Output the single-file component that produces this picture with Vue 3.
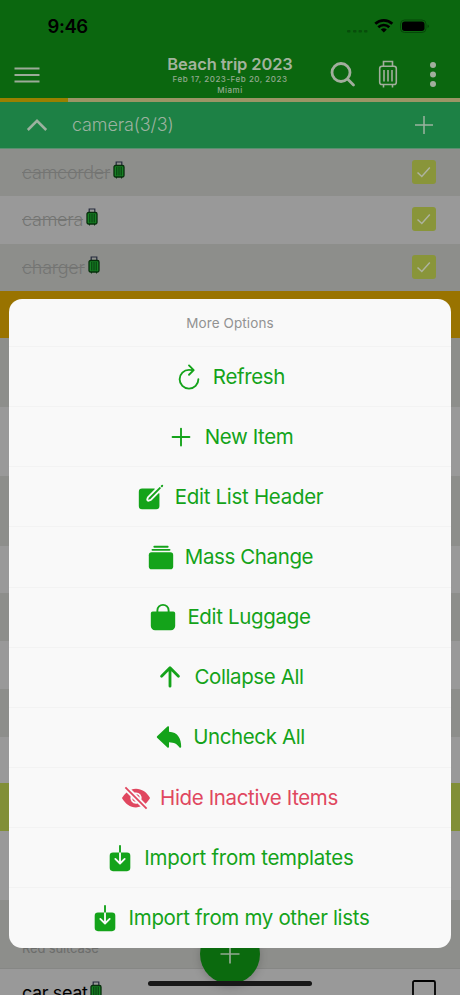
<script setup>
const actions = [
  { label: 'Refresh', icon: 'refresh', track: -0.35 },
  { label: 'New Item', icon: 'add', track: -0.4 },
  { label: 'Edit List Header', icon: 'create', track: -0.3 },
  { label: 'Mass Change', icon: 'albums', track: -0.4 },
  { label: 'Edit Luggage', icon: 'bag', track: -0.33 },
  { label: 'Collapse All', icon: 'up', track: -0.4 },
  { label: 'Uncheck All', icon: 'undo', track: -0.4 },
  { label: 'Hide Inactive Items', icon: 'eyeoff', track: -0.37, danger: true },
  { label: 'Import from templates', icon: 'download', track: -0.25 },
  { label: 'Import from my other lists', icon: 'download', track: -0.33 }
]
const shapes = {
  refresh: { line: 'M320 146s24.36-12-64-12a160 160 0 10160 160M256 58l80 80-80 80', w: 32 },
  add: { line: 'M256 112v288M400 256H112', w: 32 },
  create: { fill: 'M459.94 53.25a16.06 16.06 0 00-23.22-.56L424.35 65a8 8 0 000 11.31l11.34 11.32a8 8 0 0011.34 0l12.06-12c6.1-6.09 6.67-16.01.85-22.38zM399.34 90L218.82 270.2a9 9 0 00-2.31 3.93L208.16 299a3.91 3.91 0 004.86 4.86l24.85-8.35a9 9 0 003.93-2.31L422 112.66a9 9 0 000-12.66l-9.95-10a9 9 0 00-12.71 0zM386.34 193.66L264.45 315.79A41.08 41.08 0 01247.58 326l-25.9 8.67a35.92 35.92 0 01-44.33-44.33l8.67-25.9a41.08 41.08 0 0110.19-16.87l122.13-121.91a8 8 0 00-5.65-13.66H104a56 56 0 00-56 56v240a56 56 0 0056 56h240a56 56 0 0056-56V199.31a8 8 0 00-13.66-5.65z' },
  albums: { fill: 'M96 176h320a48 48 0 0148 48v192a48 48 0 01-48 48H96a48 48 0 01-48-48V224a48 48 0 0148-48z', line: 'M110 134h292M142 82h228', w: 32 },
  bag: { fill: 'M432 160h-64v-16a112 112 0 00-224 0v16H80a32 32 0 00-32 32v216a72 72 0 0072 72h272a72 72 0 0072-72V192a32 32 0 00-32-32zm-256-16a80 80 0 01160 0v16H176z' },
  up: { line: 'M112 244l144-144 144 144M256 120v292', w: 48 },
  undo: { fill: 'M448 440a16 16 0 01-12.61-6.15c-22.86-29.27-44.07-51.86-73.32-67C335 352.88 301 345.59 256 344.23V424a16 16 0 01-27 11.57l-176-168a16 16 0 010-23.14l176-168A16 16 0 01256 88v80.36c74.14 3.41 129.38 30.91 164.35 81.87C449.32 292.44 464 350.9 464 424a16 16 0 01-16 16z' },
  eyeoff: { fill: 'M63.998 86.004l21.998-21.998L448 426.01l-21.998 21.998zM259.34 192.09l60.57 60.57a64.07 64.07 0 00-60.57-60.57zM252.66 319.91l-60.57-60.57a64.07 64.07 0 0060.57 60.57zM256 352a96 96 0 01-92.6-121.34l-69.07-69.08C66.12 187.42 39.24 221.14 16 256c26.42 44 62.56 89.24 100.2 115.18C159.38 400.92 206.33 416 255.76 416A233.47 233.47 0 00335 402.2l-53.61-53.6A95.84 95.84 0 01256 352zM256 160a96 96 0 0192.6 121.34L419.26 352c29.15-26.25 56.07-61.56 76.74-96-26.38-43.43-62.9-88.56-101.18-114.82C351.1 111.2 304.31 96 255.76 96a222.92 222.92 0 00-78.21 14.29l53.11 53.11A95.84 95.84 0 01256 160z' },
  download: { fill: 'M376 160H272v153.37l52.69-52.68a16 16 0 0122.62 22.62l-80 80a16 16 0 01-22.62 0l-80-80a16 16 0 0122.62-22.62L240 313.37V160H136a56.06 56.06 0 00-56 56v208a56.06 56.06 0 0056 56h240a56.06 56.06 0 0056-56V216a56.06 56.06 0 00-56-56zM272 48a16 16 0 00-32 0v112h32z' }
}
const packed = ['camcorder', 'camera', 'charger']
const covered = [
  { kind: 'amber', h: 47.5 }, { kind: 'odd', h: 69 }, { kind: 'even', h: 69 },
  { kind: 'odd', h: 69.5 }, { kind: 'even', h: 47.5 }, { kind: 'odd', h: 48 },
  { kind: 'even', h: 48 }, { kind: 'odd', h: 47.5 }, { kind: 'even', h: 46.5 },
  { kind: 'lime', h: 48 }, { kind: 'even', h: 69 }
]
</script>

<template>
  <div class="screen">
    <header class="top">
      <div class="status">
        <span class="clock">9:46</span>
        <svg class="signals" width="84.500" height="20" viewBox="0 0 84.500 20">
          <g fill="#084d0b"><rect x="1" y="14" width="3.500" height="2.500" rx="1" /><rect x="7" y="14" width="3.500" height="2.500" rx="1" /><rect x="12.500" y="14" width="3.500" height="2.500" rx="1" /><rect x="18" y="14" width="3.500" height="2.500" rx="1" /></g>
          <path d="M29.300 7.800a12.200 12.200 0 0117 0M32.300 11.200a8 8 0 0111 0" fill="none" stroke="#000" stroke-width="2.700" />
          <path d="M37.800 16.600l-3-3a4.300 4.300 0 016 0z" />
          <rect x="54.500" y="4" width="25.500" height="12.500" rx="4" fill="none" stroke="#064709" />
          <rect x="56" y="5.500" width="22.500" height="9.500" rx="2.700" />
          <path d="M81.500 8.500v3.600q1.500-.6 1.500-1.800T81.500 8.500z" fill="#064709" />
        </svg>
      </div>
      <div class="bar">
        <svg class="burger" width="26" height="18" viewBox="0 0 26 18"><path d="M.5 2.500h25M.5 9h25M.5 15.500h25" stroke="#9cab98" stroke-width="1.800" /></svg>
        <div class="heading">
          <div class="title">Beach trip 2023</div>
          <div class="dates">Feb 17, 2023-Feb 20, 2023</div>
          <div class="place">Miami</div>
        </div>
        <div class="tools">
          <svg width="28" height="28" viewBox="0 0 28 28" fill="none" stroke="#a2ae9d" stroke-width="2.800" stroke-linecap="round"><circle cx="12" cy="12.500" r="9" /><path d="M18.800 19.300l5.700 5.700" /></svg>
          <svg class="case" width="20" height="28" viewBox="0 0 20 28" fill="none" stroke="#a2ae9d" stroke-width="1.600"><path d="M5.500 6V1.500h9V6M4 6.300h12q2.300 0 2.300 2.300v13.600q0 2.300-2.300 2.300H4q-2.300 0-2.300-2.300V8.600Q1.700 6.300 4 6.300zM6 10v11.500M10 10v11.500M14 10v11.500M5.500 25v2.500M14.500 25v2.500" /></svg>
          <svg class="dots" width="8" height="28" viewBox="0 0 8 28" fill="#a2ae9d"><circle cx="4" cy="5" r="3" /><circle cx="4" cy="14.500" r="3" /><circle cx="4" cy="24" r="3" /></svg>
        </div>
      </div>
      <div class="progress"><div class="done"></div></div>
    </header>

    <div class="group">
      <svg width="22" height="14" viewBox="0 0 22 14" fill="none" stroke="#9cb2a0" stroke-width="2.500"><path d="M1.800 12L11 2.800 20.200 12" /></svg>
      <span class="groupname">camera(3/3)</span>
      <svg width="20" height="20" viewBox="0 0 20 20" stroke="#9cb2a0" stroke-width="1.500"><path d="M10 1v18M1 10h18" /></svg>
    </div>

    <div v-for="(name, i) in packed" :key="name" class="item" :class="i % 2 ? 'even' : 'odd'">
      <span class="struck">{{ name }}</span>
      <svg class="tag" width="12" height="18" viewBox="0 0 12 18"><path d="M3.200 5V1h5.600V5" fill="none" stroke="#252a3c" stroke-width="1.200" /><rect x="1" y="4.500" width="10" height="11.500" rx="1.500" fill="#178024" stroke="#062f0b" stroke-width="1.300" /><path d="M3.800 6v8.500M6 6v8.500M8.200 6v8.500M3.500 16v1.500M8.500 16v1.500" stroke="#062f0b" stroke-width=".9" /></svg>
      <svg class="check" width="24" height="24" viewBox="0 0 24 24"><rect width="24" height="24" rx="3" fill="#89953a" /><path d="M5.500 12.500l4.300 4 8-9" fill="none" stroke="#aeb39f" stroke-width="1.500" /></svg>
    </div>
    <div v-for="(row, i) in covered" :key="i" class="row" :class="row.kind" :style="{ height: row.h + 'px' }"></div>
    <div class="row odd noted"><span class="note">Red suitcase</span></div>
    <div class="item last">
      <span class="name">car seat</span>
      <svg class="tag" width="12" height="18" viewBox="0 0 12 18"><path d="M3.200 5V1h5.600V5" fill="none" stroke="#252a3c" stroke-width="1.200" /><rect x="1" y="4.500" width="10" height="11.500" rx="1.500" fill="#178024" stroke="#062f0b" stroke-width="1.300" /><path d="M3.800 6v8.500M6 6v8.500M8.200 6v8.500" stroke="#062f0b" stroke-width=".9" /></svg>
      <svg class="check" width="24" height="24" viewBox="0 0 24 24"><rect x="1" y="1" width="22" height="22" rx="1.500" fill="none" stroke="#000" stroke-width="1.800" /></svg>
    </div>

    <div class="fab"><svg width="20" height="20" viewBox="0 0 20 20" stroke="#93a991" stroke-width="1.700"><path d="M10 .5v19M.5 10h19" /></svg></div>
    <div class="home"></div>

    <div class="sheet">
      <div class="sheethead">More Options</div>
      <div v-for="a in actions" :key="a.label" class="action" :class="{ danger: a.danger }">
        <svg class="glyph" viewBox="0 0 512 512">
          <path v-if="shapes[a.icon].fill" :d="shapes[a.icon].fill" fill="currentColor" />
          <path v-if="shapes[a.icon].line" :d="shapes[a.icon].line" fill="none" stroke="currentColor" :stroke-width="shapes[a.icon].w" stroke-linecap="round" stroke-linejoin="round" />
        </svg>
        <span class="label" :style="{ letterSpacing: a.track + 'px' }">{{ a.label }}</span>
      </div>
    </div>
  </div>
</template>

<style>
body { margin: 0; overflow: hidden; }
</style>

<style scoped>
* { box-sizing: border-box; }
.screen { position: relative; width: 460px; height: 995px; overflow: hidden; background: #999; font-family: Inter, "Liberation Sans", sans-serif; }
svg { display: block; flex: none; }
.top { height: 101.500px; background: #0b670f; display: flex; flex-direction: column; }
.status { height: 52px; padding: 16px 29.500px 0 47.500px; display: flex; justify-content: space-between; }
.clock { font-size: 18.500px; line-height: 21px; font-weight: 600; color: #000; letter-spacing: -0.400px; }
.bar { height: 46px; display: grid; grid-template-columns: 140px 180px 140px; }
.burger { margin: 14px 0 0 14px; }
.heading { text-align: center; color: #a2b39d; white-space: nowrap; }
.title { font-size: 16.500px; line-height: 20px; font-weight: 600; margin-top: 2px; letter-spacing: -0.130px; }
.dates { font-size: 8px; line-height: 11px; font-weight: 500; letter-spacing: 0.520px; color: #93aa8f; }
.place { font-size: 8px; line-height: 11px; font-weight: 500; letter-spacing: 0.520px; color: #93aa8f; }
.tools { display: flex; padding: 8px 0 0 9px; }
.case { margin: 0 0 0 21px; }
.dots { margin-left: 31px; }
.progress { height: 3.500px; background: #9b9566; }
.done { width: 68px; height: 100%; background: #998000; }
.group { height: 47.500px; background: #1d8145; display: flex; align-items: center; padding: 0 26px; border-bottom: 1px solid #59906f; }
.groupname { flex: 1; margin-left: 24px; font-size: 18px; font-weight: 300; letter-spacing: -0.150px; color: #9cb2a0; }
.item { height: 47.300px; display: flex; padding: 0 24px 0 22px; }
.odd { background: #8d8e8b; }
.even { background: #999; }
.amber { background: #997300; }
.lime { background: #818f37; }
.struck { font-size: 18px; line-height: 48px; font-weight: 300; letter-spacing: -0.250px; color: #747573; text-decoration: line-through; }
.tag { margin: 12px 0 0 3px; }
.check { margin: 11px 0 0 auto; }
.row { width: 100%; }
.noted { height: 69px; border-bottom: 1px solid #868785; padding: 38px 22px 0; }
.note { display: block; font-size: 13px; line-height: 20px; letter-spacing: -0.150px; color: #6c6d6b; }
.last { background: #999; }
.name { font-size: 18px; line-height: 48px; letter-spacing: -0.400px; color: #000; }
.fab { position: absolute; left: 200px; top: 924px; width: 60px; height: 60px; border-radius: 50%; background: #0b6a0e; display: grid; place-items: center; box-shadow: 0 3px 8px rgba(0,0,0,.18); }
.home { position: absolute; left: 148px; top: 981px; width: 164px; height: 5px; border-radius: 3px; background: #171717; }
.sheet { position: absolute; left: 9px; top: 299px; width: 442px; height: 648.500px; border-radius: 13px; background: #f9f9f9; }
.sheethead { height: 47px; line-height: 49px; text-align: center; font-size: 13.500px; color: #929292; letter-spacing: 0.100px; }
.action { height: 60.150px; display: flex; align-items: center; justify-content: center; gap: 9px; padding-right: 1px; border-top: 1px solid #f3f3f3; color: #14a31a; }
.danger { color: #e0475f; }
.glyph { width: 30px; height: 30px; }
.label { font-size: 20.500px; line-height: 28px; font-weight: 400; white-space: nowrap; }
</style>
